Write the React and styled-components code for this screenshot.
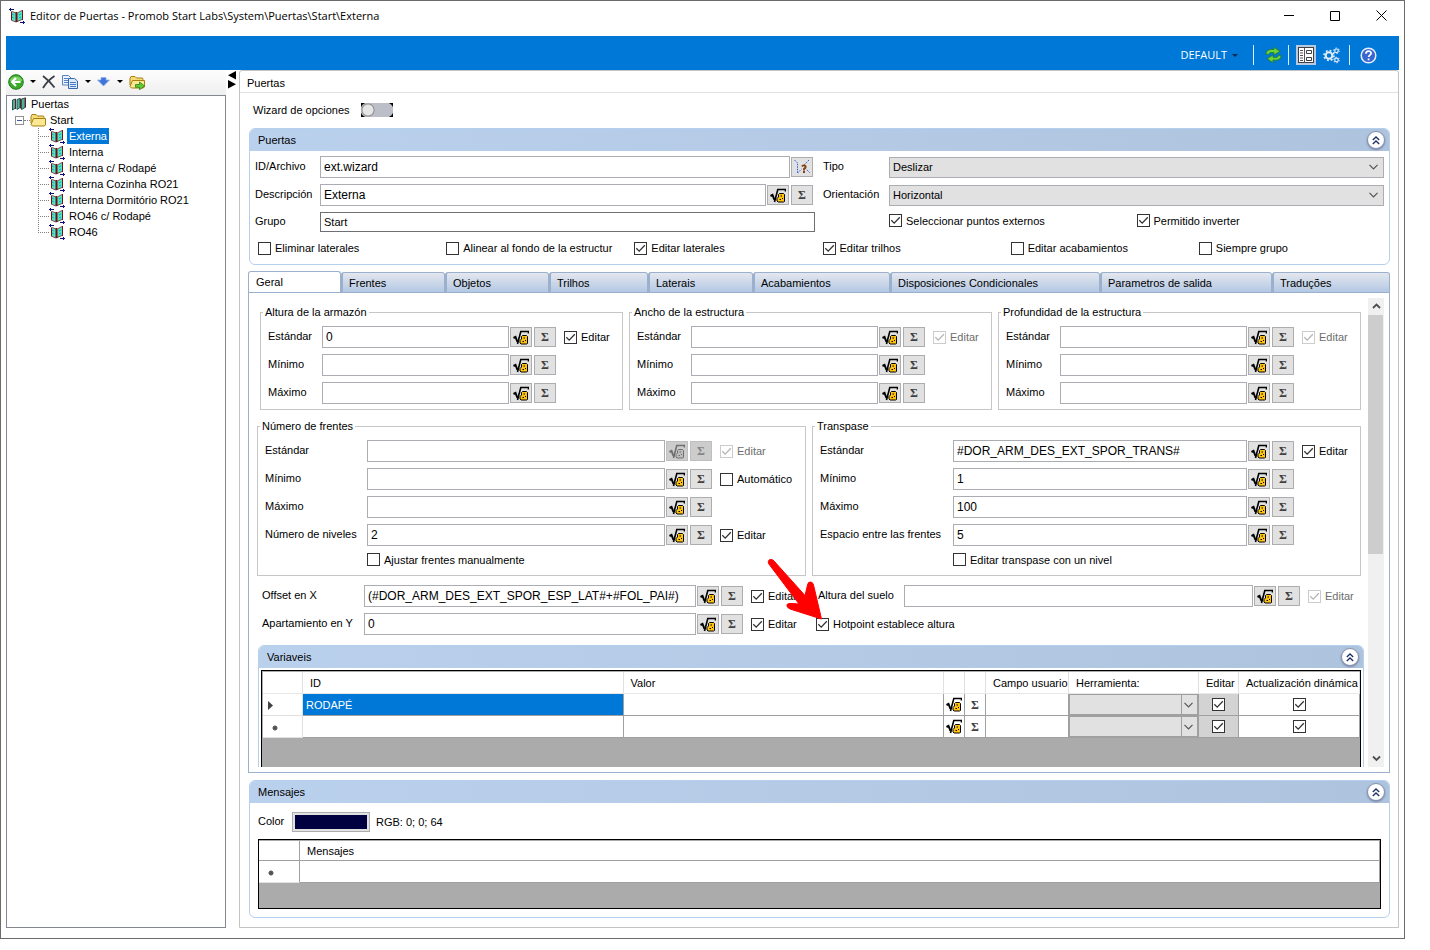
import React, { useState } from "react";
import styled, { createGlobalStyle, css } from "styled-components";

const BLUE = "#0078d7";
const EDGE = "#abadb3";
const CHEVRON =
  "url(\"data:image/svg+xml,%3Csvg xmlns='http://www.w3.org/2000/svg' width='9' height='6'%3E%3Cpath d='M.5 .8l4 4 4-4' fill='none' stroke='%23555' stroke-width='1.2'/%3E%3C/svg%3E\")";
const tick = (color) =>
  `url("data:image/svg+xml,%3Csvg xmlns='http://www.w3.org/2000/svg' width='11' height='11'%3E%3Cpath d='M1.3 5.2l2.9 2.9 5.6-5.9' fill='none' stroke='%23${color}' stroke-width='1.3'/%3E%3C/svg%3E")`;

const GlobalStyle = createGlobalStyle`
  *, *::before, *::after { box-sizing: border-box; }
  body { margin: 0; background: #fff; color: #000; font: 11px/16px "Liberation Sans", Arial, sans-serif; }
  button, input, select { font: inherit; color: inherit; margin: 0; padding: 0; border-radius: 0; }
  ul { list-style: none; margin: 0; padding: 0; }
  svg { display: block; flex: none; }
`;

/* ---------- window frame ---------- */
const Window = styled.div`
  display: flex;
  flex-direction: column;
  height: calc(100vh - 11px);
  min-height: 720px;
  min-width: 1180px;
  margin-right: 25px;
  padding: 0 5px 10px;
  border: 1px solid #6b6b6b;
`;
const TitleBar = styled.header`
  display: flex;
  align-items: center;
  height: 35px;
  padding: 0 0 6px 3px;
  gap: 5px;
`;
const Title = styled.h1`
  flex: 1;
  margin: 0;
  font: 12px/16px "Open Sans", sans-serif;
  font-size: 11px;
`;
const PlainButton = styled.button`
  display: flex;
  align-items: center;
  justify-content: center;
  border: 0;
  background: none;
`;
const CaptionButton = styled(PlainButton)`
  width: 36px;
  height: 28px;
  margin-left: 5px;
`;
const Ribbon = styled.nav`
  display: flex;
  align-items: center;
  justify-content: flex-end;
  flex: none;
  height: 34px;
  padding: 4px 21px 0 0;
  background: ${BLUE};
  color: #fff;
`;
const ProfileButton = styled(PlainButton)`
  gap: 5px;
  margin-right: 15px;
  font: 11px/16px "Open Sans", sans-serif;
`;
const Divider = styled.span`
  width: 1px;
  height: 20px;
  background: #dcebf8;
`;
const RibbonButton = styled(PlainButton)`
  width: ${(p) => p.$w || 20}px;
  height: 20px;
  margin: 0 ${(p) => p.$right || 0}px 0 ${(p) => p.$left || 0}px;
  background: ${(p) => (p.$active ? "#b9c9e2" : "none")};
`;
const Workspace = styled.div`
  display: flex;
  flex: 1;
  min-height: 0;
`;

/* ---------- tree side ---------- */
const Sidebar = styled.aside`
  display: flex;
  flex-direction: column;
  width: 220px;
  flex: none;
`;
const ToolStrip = styled.div`
  display: flex;
  align-items: center;
  flex: none;
  height: 25px;
  padding: 0 0 2px 1px;
  background: linear-gradient(#fdfdfd, #efefef);
`;
const ToolButton = styled(PlainButton)`
  width: ${(p) => p.$w}px;
  height: 20px;
`;
const Tree = styled.div`
  flex: 1;
  padding: 0 4px;
  border: 1px solid #828790;
`;
const TreeRow = styled.div`
  display: flex;
  align-items: center;
  height: 16px;
  padding-left: ${(p) => p.$indent || 0}px;
`;
const Dots = styled.span`
  width: ${(p) => p.$w}px;
  border-top: 1px dotted #808080;
`;
const Leaves = styled.ul`
  margin-left: 27px;
  background: repeating-linear-gradient(#808080 0 1px, transparent 1px 2px) 0 0 / 1px calc(100% - 8px) no-repeat;
`;
const NodeName = styled.button`
  height: 16px;
  margin-left: ${(p) => p.$gap || 2}px;
  padding: 0 2px;
  border: 0;
  line-height: 16px;
  background: ${(p) => (p.$selected ? BLUE : "none")};
  color: ${(p) => (p.$selected ? "#fff" : "#000")};
`;
const Expander = styled.button`
  display: flex;
  align-items: center;
  justify-content: center;
  width: 9px;
  height: 9px;
  border: 1px solid #919191;
  background: #fff;
  &::after { content: ""; width: 5px; height: 1px; background: #3c5aa0; }
`;
const Splitter = styled.div`
  width: 13px;
  flex: none;
  padding: 1px 0 0 2px;
`;

/* ---------- main side ---------- */
const Main = styled.main`
  display: flex;
  flex-direction: column;
  flex: 1;
  min-width: 0;
  border: 1px solid #c3c3c3;
  border-radius: 3px 3px 0 0;
`;
const Heading = styled.h2`
  flex: none;
  height: 22px;
  margin: 0;
  padding: 4px 7px 0;
  border-bottom: 1px solid #e1e1e1;
  font: inherit;
`;
const WizardRow = styled.label`
  display: flex;
  align-items: center;
  flex: none;
  gap: 11px;
  height: 35px;
  padding: 0 13px 1px;
`;
const Switch = styled.input`
  appearance: none;
  width: 32px;
  height: 14px;
  background:
    radial-gradient(circle at 7px 7px, #e6e6e6 5px, #8c8c8c 6px, transparent 7px),
    radial-gradient(circle at 7px 7px, #bcbec8 7px, transparent 8px),
    radial-gradient(circle at 25px 7px, #bcbec8 7px, transparent 8px),
    linear-gradient(90deg, #000 7px, #bcbec8 7px 25px, #000 25px);
`;
const Panel = styled.section`
  flex: none;
  margin: ${(p) => (p.$inner ? "10px -3px 0 1px" : "0 8px 0 9px")};
  border: 1px solid #b5d0ee;
  border-radius: 6px;
`;
const PanelHeader = styled.header`
  display: flex;
  align-items: center;
  justify-content: space-between;
  height: 22px;
  padding: 0 4px 0 8px;
  border-radius: 5px 5px 0 0;
  background: linear-gradient(90deg, #bad1ed, #aec3de);
`;
const PanelTitle = styled.h3`
  margin: 0;
  font: inherit;
`;
const Collapse = styled(PlainButton)`
  width: 18px;
  height: 18px;
  border: 1px solid #8791ad;
  border-radius: 9px;
  background: #fff;
  box-shadow: 0 1px 2px rgba(60, 70, 110, 0.5);
`;
const DoorForm = styled.div`
  display: grid;
  grid-template-columns: 65px minmax(0, 1fr) 74px minmax(0, 1fr);
  row-gap: 6px;
  padding: 5px 5px 0;
`;
const Label = styled.label`
  width: ${(p) => (p.$w ? `${p.$w}px` : "auto")};
  flex: none;
  padding-bottom: 3px;
  padding-left: ${(p) => p.$left || 0}px;
  white-space: nowrap;
`;
const GridLabel = styled(Label)`
  align-self: center;
`;
const TextBox = styled.input`
  flex: 1;
  min-width: 0;
  width: 100%;
  height: ${(p) => (p.$flat ? 20 : 22)}px;
  padding: 0 3px;
  border: 1px solid ${(p) => (p.$flat ? "#6f6f74" : EDGE)};
  background: #fff;
  font-size: ${(p) => (p.$flat ? 11 : 12)}px;
`;
const InputGroup = styled.div`
  display: flex;
  align-items: center;
  gap: ${(p) => (p.$gap === undefined ? 1 : p.$gap)}px;
  min-width: 0;
  padding-right: ${(p) => p.$right || 0}px;
`;
const SmallButton = styled.button`
  display: flex;
  align-items: center;
  justify-content: center;
  flex: none;
  width: 22px;
  height: 20px;
  margin-right: ${(p) => p.$right || 0}px;
  border: 1px solid #adadb0;
  background: #e1e1e1;
  &:disabled { background: #ccc; border-color: #bfbfbf; }
`;
const Sigma = styled.span`
  font: bold 12px/14px "Liberation Serif", serif;
  color: ${(p) => (p.$off ? "#858585" : "#404040")};
`;
const Select = styled.select`
  appearance: none;
  width: 100%;
  height: 21px;
  padding: 0 3px;
  border: 1px solid ${EDGE};
  background: ${CHEVRON} right 5px center no-repeat #e1e1e1;
  opacity: 1;
`;
const GridSelect = styled(Select)`
  display: block;
  height: 21px;
  border-color: #a0a0a0;
  background: ${CHEVRON} right 4px center no-repeat,
    linear-gradient(#a0a0a0, #a0a0a0) right 15px top / 1px 100% no-repeat, #e1e1e1;
`;
const CheckLabel = styled.label`
  display: flex;
  align-items: center;
  gap: 4px;
  flex: none;
  white-space: nowrap;
  color: ${(p) => (p.$off ? "#6d6d6d" : "#000")};
`;
const CheckBox = styled.input`
  appearance: none;
  flex: none;
  width: 13px;
  height: 13px;
  border: 1px solid #333;
  background: #fff;
  &:checked { background: ${tick("333")} center no-repeat #fff; }
  &:disabled { border-color: #ccc; }
  &:disabled:checked { background-image: ${tick("b5b5b5")}; }
`;
const PairRow = styled.div`
  display: flex;
  grid-column: span 2;
  height: 17px;
  padding-left: 74px;
`;
const PairItem = styled.div`
  display: flex;
  width: 250px;
`;
const FlagRow = styled.div`
  display: grid;
  grid-template-columns: repeat(6, 1fr);
  height: 32px;
  align-items: center;
  padding: 0 2px 0 8px;
`;

/* ---------- tabs ---------- */
const TabList = styled.div`
  display: grid;
  grid-template-columns: ${(p) => p.$sizes.map((n) => `minmax(0, ${n}fr)`).join(" ")};
  align-items: end;
  flex: none;
  margin: 6px 8px -1px 8px;
`;
const Tab = styled.button`
  min-width: 0;
  height: 21px;
  padding: 0 6px;
  border: 1px solid #9ab0cd;
  border-left-width: 2px;
  border-radius: 3px 3px 0 0;
  background: linear-gradient(#e4e7ee, #b3c8e4);
  text-align: left;
  white-space: nowrap;
  ${(p) =>
    p.$active &&
    css`
      height: 22px;
      padding: 0 7px;
      border-left-width: 1px;
      border-bottom-color: #d5dfec;
      background: #fff;
    `}
`;
const TabBody = styled.div`
  display: flex;
  flex: 1;
  min-height: 0;
  margin: 0 8px 7px 8px;
  padding: 5px;
  border: 1px solid #9ab0cd;
`;
const ScrollArea = styled.div`
  flex: 1;
  min-width: 0;
  overflow: hidden;
  padding: 6px 7px 0 3px;
`;
const ScrollBar = styled.div`
  display: flex;
  flex-direction: column;
  width: 16px;
  flex: none;
  background: #f0f0f0;
`;
const ScrollTrack = styled.div`
  flex: 1;
`;
const ScrollThumb = styled.div`
  height: 55%;
  margin-right: 1px;
  background: #cdcdcd;
`;
const ScrollButton = styled(PlainButton)`
  height: 17px;
`;
const Columns = styled.div`
  display: flex;
  gap: 6px;
  margin-left: ${(p) => p.$left || 0}px;
  margin-bottom: ${(p) => p.$bottom || 0}px;
`;
const Group = styled.fieldset`
  display: flex;
  flex-direction: column;
  flex: 1 1 0;
  gap: 6px;
  min-width: 0;
  margin: 0;
  padding: 6px 0 5px 7px;
  border: 1px solid #c6c6c6;
`;
const Legend = styled.legend`
  margin-left: -5px;
  padding: 0 2px;
`;
const UnderField = styled.div`
  display: flex;
  height: 18px;
  padding-left: ${(p) => p.$left}px;
  padding-bottom: 3px;
`;
const OffsetGrid = styled.div`
  display: grid;
  grid-template-columns: 556fr 543fr;
  row-gap: 6px;
  padding-left: 5px;
`;
const Pinned = styled.div`
  position: relative;
  display: flex;
  align-items: center;
  margin-left: -2px;
`;
const Pointer = styled.svg`
  position: absolute;
  right: calc(100% - 8px);
  bottom: 15px;
  pointer-events: none;
`;

/* ---------- data grids ---------- */
const GridFrame = styled.div`
  height: ${(p) => p.$h}px;
  margin: ${(p) => (p.$inner ? "2px 2px 0" : "0 8px 8px")};
  padding: 1px 0 0 ${(p) => (p.$inner ? 1 : 0)}px;
  border: 1px solid #000;
  background: #ababab;
`;
const DataTable = styled.table`
  width: 100%;
  table-layout: fixed;
  border-collapse: separate;
  border-spacing: 0;
  background: #fff;
`;
const HeadCell = styled.th`
  height: ${(p) => p.$h || 22}px;
  padding: 0 7px;
  border-right: 1px solid ${(p) => p.$line || "#e0e0e0"};
  border-bottom: 1px solid ${(p) => p.$line || "#e8e8e8"};
  font-weight: normal;
  text-align: left;
  white-space: nowrap;
`;
const Cell = styled.td`
  height: 22px;
  padding: 0 ${(p) => (p.$flush ? 0 : 3)}px;
  border-right: 1px solid #a0a0a0;
  border-bottom: 1px solid #a0a0a0;
  background: ${(p) => (p.$selected ? BLUE : p.$shade ? "#d3d3d3" : "#fff")};
  color: ${(p) => (p.$selected ? "#fff" : "#000")};
  text-align: ${(p) => (p.$center ? "center" : "left")};
`;
const RowHead = styled.th`
  height: 22px;
  padding: 2px 5px 0;
  border-right: 1px solid ${(p) => p.$line || "#e0e0e0"};
  border-bottom: 1px solid #e0e0e0;
`;
const CellButton = styled(PlainButton)`
  width: 100%;
  height: 20px;
`;
const CenterBox = styled(CheckBox)`
  display: block;
  margin: 0 auto;
`;
const ColorRow = styled.div`
  display: flex;
  align-items: center;
  height: 36px;
  padding: 2px 8px 0;
`;
const ColorButton = styled.button`
  width: 78px;
  height: 20px;
  margin-right: 6px;
  padding: 2px;
  border: 1px solid #adadad;
  background: #e1e1e1;
  &::after { content: ""; display: block; height: 14px; background: #000040; }
`;
const BottomSpace = styled.div`
  flex: none;
  height: 9px;
`;

/* ---------- icons ---------- */
const DoorIcon = () => (
  <svg width="16" height="16" viewBox="0 0 16 16">
    <path d="M2 3.500l5 1.500v9l-5-2z" fill="#4fe6c4" />
    <path d="M8 5l5.500-2.500v9L8 14z" fill="#4fe6c4" />
    <path d="M3 6l2 1M3 9l2 1M10 7l2-1M10 10l2-1" stroke="#1f9fb5" />
    <path d="M2.500 3.500v9M13.500 2v10" stroke="#7a0c18" />
    <path d="M7.500 4v10" stroke="#7a0c18" strokeWidth="2" />
    <path d="M3 3.500l4 1.500M9 4.500l4-2M3 12.500l4 1.500 6-2.500" stroke="#7a0c18" strokeWidth=".7" fill="none" />
    <path d="M0 1.500h5M1.500 0v3M11 14.500h5M14.500 13v3" stroke="#10107c" fill="none" />
  </svg>
);
const DoorsIcon = () => (
  <svg width="16" height="16" viewBox="0 0 16 16">
    <path d="M1.500 4l3-1v9l-3 2zM6 3.500l3-1v9l-3 2zM10.500 3l3.500-1v9.500l-3.500 2z" fill="#4fb39b" stroke="#245a52" />
    <path d="M4.500 3v10M9.500 2.500v10M14.500 1.500v10" stroke="#6d1a22" />
  </svg>
);
const FolderIcon = ({ move }) => (
  <svg width="16" height="16" viewBox="0 0 16 16">
    <path d="M1 4.500l1-2h4l1.500 1.500h6l.5 1.500V11H1z" fill="#f5dc78" stroke="#a97e12" />
    <path d="M3.500 6.500h12V13l-1.500 1H2.500L1 12.500z" fill="#fae893" stroke="#a97e12" />
    {move && <path d="M6.500 10.500h4v-2.500l5 4-5 3.800v-2.500h-4z" fill="#5fce35" stroke="#2e7d14" strokeWidth=".8" />}
  </svg>
);
const BackIcon = () => (
  <svg width="16" height="16" viewBox="0 0 16 16">
    <circle cx="8" cy="8" r="7.300" fill="#3cab2c" stroke="#1f7a17" />
    <path d="M1.800 7a6.300 5.500 0 0 1 12.400 0z" fill="#80d168" />
    <path d="M12.500 8h-8M8 4L4 8l4 4" stroke="#fff" strokeWidth="2" fill="none" />
  </svg>
);
const DeleteIcon = () => (
  <svg width="14" height="14" viewBox="0 0 14 14">
    <path d="M1 1c4 3 8 7 11.500 11.500M12.500 1C8 4 4 8 1 13" stroke="#3b3f46" strokeWidth="1.800" fill="none" />
  </svg>
);
const CopyIcon = () => (
  <svg width="16" height="14" viewBox="0 0 16 14">
    <path d="M.5.500h6l2.500 2.500v7H.5z" fill="#e9f1fc" stroke="#5a84bf" />
    <path d="M2 3.500h4M2 5.500h4M2 7.500h4" stroke="#5a84bf" />
    <path d="M6.500 3.500h6l3 2.500v7.500h-9z" fill="#dce9fb" stroke="#3767ad" />
    <path d="M8 7.500h6M8 9.500h6M8 11.500h6" stroke="#4a7bc0" />
  </svg>
);
const DownIcon = () => (
  <svg width="13" height="10" viewBox="0 0 13 10">
    <path d="M4 .5h5V3h3.500L6.500 9 .5 3H4z" fill="#3f74d8" stroke="#8fb0e6" strokeWidth=".8" />
  </svg>
);
const Caret = ({ color = "#000" }) => (
  <svg width="6" height="3" viewBox="0 0 6 3">
    <path d="M0 0h6L3 3z" fill={color} />
  </svg>
);
const RefreshIcon = () => (
  <svg width="17" height="16" viewBox="0 0 17 16">
    <path d="M1 7c0-3.500 3-5 8-4.500V.3L15 4.300 9 8V5.700C5 5.200 4 6 3.500 7.800z" fill="#6bd23c" stroke="#247a1a" strokeWidth=".8" />
    <path d="M16 8.500c0 4-3 5.200-8 4.500v2.700L2 11.800 8 8v2.200c4 .6 5 0 5.500-2z" fill="#6bd23c" stroke="#247a1a" strokeWidth=".8" />
  </svg>
);
const FormIcon = () => (
  <svg width="17" height="17" viewBox="0 0 17 17">
    <rect x=".5" y=".5" width="15" height="15" fill="#fff" stroke="#404040" />
    <path d="M6.500 1v15M2 3.500h3M2 6h3M2 8.500h3M2 11h3M2 13.500h3" stroke="#555" fill="none" />
    <path d="M8.500 3.500h5v3h-5zM8.500 10.500h5v3h-5z" fill="#fff" stroke="#404040" />
  </svg>
);
const GearsIcon = () => (
  <svg width="17" height="17" viewBox="0 0 17 17" fill="none" stroke="#e4eefa">
    <circle cx="6" cy="8.500" r="3.300" strokeWidth="2" />
    <circle cx="6" cy="8.500" r="5" strokeWidth="1.600" strokeDasharray="1.960 1.960" />
    <circle cx="13.500" cy="3.800" r="1.800" strokeWidth="1.200" />
    <circle cx="13.500" cy="3.800" r="2.800" strokeDasharray="1.400 1.530" />
    <circle cx="13.500" cy="13" r="1.800" strokeWidth="1.200" />
    <circle cx="13.500" cy="13" r="2.800" strokeDasharray="1.400 1.530" />
  </svg>
);
const HelpIcon = () => (
  <svg width="17" height="17" viewBox="0 0 17 17">
    <circle cx="8.500" cy="8.500" r="7.300" fill="#3a66d0" stroke="#e8eefb" strokeWidth="1.500" />
    <path d="M5.900 6.700c0-3.500 5.400-3.400 5.200-.3-.1 1.700-2.500 1.700-2.500 3.700" stroke="#fff" strokeWidth="1.700" fill="none" />
    <path d="M7.700 11.500h1.800v1.800H7.700z" fill="#fff" />
  </svg>
);
const FormulaIcon = ({ off }) => {
  const ink = off ? "#6f6f6f" : "#000";
  return (
    <svg width="16" height="15" viewBox="0 0 16 15">
      <path d="M.5 8L2.500 7 4.500 12" stroke={ink} strokeWidth="2" fill="none" />
      <path d="M4.500 14L7.800 1.500H15.500V3.500" stroke={ink} strokeWidth="1.600" fill="none" />
      <path d="M9.500 5.500h4l1 1V13.500l-1 .500H8L7 13v-2.500l1.500-1.500V6.500z" fill={off ? "#bdbdbd" : "#ffc20e"} stroke={ink} />
      <path d="M10.500 7.500h1.500v1h-1.500zM9.500 11h1.500v1H9.500zM12 10h1v1h-1z" fill={ink} />
    </svg>
  );
};
const WizardIcon = () => (
  <svg width="18" height="16" viewBox="0 0 18 16">
    <path d="M1.500 1l3 3v10M4.500 14l4-4M16 1l-5 5M12 9l5 5" fill="none" stroke="#2d5fe0" strokeDasharray="1.500 1" />
    <path d="M9 7.500c1-2 4.500-1 3.500 1L11 10v1.500M10 13h2" fill="none" stroke="#85421a" strokeWidth="1.900" />
  </svg>
);
const CollapseIcon = () => (
  <svg width="8" height="9" viewBox="0 0 8 9">
    <path d="M.8 4L4 1l3.200 3M.8 8L4 5l3.200 3" fill="none" stroke="#1d2f66" strokeWidth="1.300" />
  </svg>
);
const ScrollChevron = ({ down }) => (
  <svg width="9" height="7" viewBox="0 0 9 7">
    <path d={down ? "M1 1.500l3.500 3.500L8 1.500" : "M1 5l3.500-3.500L8 5"} fill="none" stroke="#505050" strokeWidth="1.800" />
  </svg>
);
const NewRowMark = () => (
  <svg width="12" height="8" viewBox="0 0 12 8">
    <circle cx="7" cy="4" r="2" fill="#404040" />
    <path d="M7 1v6M4 4h6M5 2l4 4M9 2L5 6" stroke="#555" strokeWidth=".8" />
  </svg>
);
const CurrentRowMark = () => (
  <svg width="6" height="9" viewBox="0 0 6 9">
    <path d="M0 0l5 4.500L0 9z" fill="#404040" />
  </svg>
);

/* ---------- parts ---------- */
function Check({ label, checked = false, off }) {
  return (
    <CheckLabel $off={off}>
      <CheckBox type="checkbox" defaultChecked={checked} disabled={off} />
      {label}
    </CheckLabel>
  );
}

function FormulaButtons({ off }) {
  return (
    <>
      <SmallButton type="button" aria-label="Fórmula" disabled={off} $right={1}>
        <FormulaIcon off={off} />
      </SmallButton>
      <SmallButton type="button" aria-label="Suma" disabled={off}>
        <Sigma $off={off}>Σ</Sigma>
      </SmallButton>
    </>
  );
}

const CheckSlot = styled.div`
  display: flex;
  flex: none;
  width: ${(p) => p.$w}px;
  padding-left: 7px;
`;

function Field({ id, label, labelWidth, value = "", slot = 65, check, offButtons }) {
  return (
    <InputGroup>
      <Label htmlFor={id} $w={labelWidth - 1}>{label}</Label>
      <TextBox id={id} defaultValue={value} />
      <FormulaButtons off={offButtons} />
      <CheckSlot $w={slot}>{check}</CheckSlot>
    </InputGroup>
  );
}

function PanelTop({ title }) {
  return (
    <PanelHeader>
      <PanelTitle>{title}</PanelTitle>
      <Collapse type="button" aria-label={`Contraer ${title}`}>
        <CollapseIcon />
      </Collapse>
    </PanelHeader>
  );
}

function DimensionGroup({ id, title, value, off }) {
  return (
    <Group>
      <Legend>{title}</Legend>
      <Field id={`${id}-std`} label="Estándar" labelWidth={54} value={value} check={<Check label="Editar" checked off={off} />} />
      <Field id={`${id}-min`} label="Mínimo" labelWidth={54} />
      <Field id={`${id}-max`} label="Máximo" labelWidth={54} />
    </Group>
  );
}

const leaves = ["Externa", "Interna", "Interna c/ Rodapé", "Interna Cozinha RO21", "Interna Dormitório RO21", "RO46 c/ Rodapé", "RO46"];
const tabs = [
  ["Geral", 93], ["Frentes", 104], ["Objetos", 104], ["Trilhos", 99], ["Laterais", 105],
  ["Acabamientos", 137], ["Disposiciones Condicionales", 210], ["Parametros de salida", 172], ["Traduções", 118],
];
const flags = [
  ["Eliminar laterales", false], ["Alinear al fondo de la estructur", false], ["Editar laterales", true],
  ["Editar trilhos", true], ["Editar acabamientos", false], ["Siempre grupo", false],
];

function VariableRow({ name, current }) {
  return (
    <tr>
      <RowHead scope="row">{current ? <CurrentRowMark /> : <NewRowMark />}</RowHead>
      <Cell $selected={current}>{name}</Cell>
      <Cell />
      <Cell $flush><CellButton type="button" aria-label="Fórmula"><FormulaIcon /></CellButton></Cell>
      <Cell $flush><CellButton type="button" aria-label="Suma"><Sigma>Σ</Sigma></CellButton></Cell>
      <Cell />
      <Cell $flush><GridSelect aria-label="Herramienta" disabled /></Cell>
      <Cell $shade $center><CenterBox type="checkbox" aria-label="Editar" defaultChecked /></Cell>
      <Cell $center><CenterBox type="checkbox" aria-label="Actualización dinámica" defaultChecked /></Cell>
    </tr>
  );
}

export default function App() {
  const [selected, setSelected] = useState("Externa");
  const [tab, setTab] = useState("Geral");
  return (
    <>
      <GlobalStyle />
      <Window>
        <TitleBar>
          <DoorIcon />
          <Title>Editor de Puertas - Promob Start Labs\System\Puertas\Start\Externa</Title>
          <CaptionButton type="button" aria-label="Minimizar">
            <svg width="10" height="1"><path d="M0 .5h10" stroke="#000" /></svg>
          </CaptionButton>
          <CaptionButton type="button" aria-label="Maximizar">
            <svg width="10" height="10"><path d="M.5.500h9v9h-9z" stroke="#000" fill="none" /></svg>
          </CaptionButton>
          <CaptionButton type="button" aria-label="Cerrar">
            <svg width="11" height="11"><path d="M.5.500l10 10M10.500.5l-10 10" stroke="#000" /></svg>
          </CaptionButton>
        </TitleBar>
        <Ribbon>
          <ProfileButton type="button">DEFAULT <Caret color="#0b2a4a" /></ProfileButton>
          <Divider />
          <RibbonButton type="button" aria-label="Actualizar" $left={9} $right={5}><RefreshIcon /></RibbonButton>
          <Divider />
          <RibbonButton type="button" aria-label="Vista de formulario" $active $left={7} $right={5}><FormIcon /></RibbonButton>
          <RibbonButton type="button" aria-label="Configuración" $right={8}><GearsIcon /></RibbonButton>
          <Divider />
          <RibbonButton type="button" aria-label="Ayuda" $left={8}><HelpIcon /></RibbonButton>
        </Ribbon>
        <Workspace>
          <Sidebar>
            <ToolStrip>
              <ToolButton type="button" aria-label="Volver" $w={17}><BackIcon /></ToolButton>
              <ToolButton type="button" aria-label="Más opciones para volver" $w={17}><Caret /></ToolButton>
              <ToolButton type="button" aria-label="Eliminar" $w={15}><DeleteIcon /></ToolButton>
              <ToolButton type="button" aria-label="Copiar" $w={28}><CopyIcon /></ToolButton>
              <ToolButton type="button" aria-label="Opciones de copia" $w={7}><Caret /></ToolButton>
              <ToolButton type="button" aria-label="Bajar" $w={24}><DownIcon /></ToolButton>
              <ToolButton type="button" aria-label="Opciones de orden" $w={9}><Caret /></ToolButton>
              <ToolButton type="button" aria-label="Mover a carpeta" $w={25}><FolderIcon move /></ToolButton>
            </ToolStrip>
            <Tree>
              <TreeRow><DoorsIcon /><NodeName type="button" $gap={2}>Puertas</NodeName></TreeRow>
              <TreeRow $indent={4}>
                <Expander type="button" aria-label="Contraer Start" />
                <Dots $w={6} />
                <FolderIcon />
                <NodeName type="button" $gap={2}>Start</NodeName>
              </TreeRow>
              <Leaves>
                {leaves.map((name) => (
                  <li key={name}>
                    <TreeRow>
                      <Dots $w={11} />
                      <DoorIcon />
                      <NodeName type="button" $selected={selected === name} onClick={() => setSelected(name)}>{name}</NodeName>
                    </TreeRow>
                  </li>
                ))}
              </Leaves>
            </Tree>
          </Sidebar>
          <Splitter>
            <svg width="8" height="18" viewBox="0 0 8 18"><path d="M8 0v8.500L0 4.300zM0 9l8 4.300L0 17.500z" fill="#000" /></svg>
          </Splitter>
          <Main>
            <Heading>Puertas</Heading>
            <WizardRow>
              Wizard de opciones
              <Switch type="checkbox" role="switch" />
            </WizardRow>
            <Panel>
              <PanelTop title="Puertas" />
              <DoorForm>
                <GridLabel htmlFor="archivo">ID/Archivo</GridLabel>
                <InputGroup $right={2}>
                  <TextBox id="archivo" defaultValue="ext.wizard" />
                  <SmallButton type="button" aria-label="Asistente"><WizardIcon /></SmallButton>
                </InputGroup>
                <GridLabel htmlFor="tipo" $left={8}>Tipo</GridLabel>
                <InputGroup $right={0}>
                  <Select id="tipo" defaultValue="Deslizar"><option>Deslizar</option></Select>
                </InputGroup>
                <GridLabel htmlFor="descripcion">Descripción</GridLabel>
                <InputGroup $right={2}>
                  <TextBox id="descripcion" defaultValue="Externa" />
                  <FormulaButtons />
                </InputGroup>
                <GridLabel htmlFor="orientacion" $left={8}>Orientación</GridLabel>
                <InputGroup>
                  <Select id="orientacion" defaultValue="Horizontal"><option>Horizontal</option></Select>
                </InputGroup>
                <GridLabel htmlFor="grupo">Grupo</GridLabel>
                <TextBox id="grupo" $flat defaultValue="Start" />
                <PairRow>
                  <PairItem><Check label="Seleccionar puntos externos" checked /></PairItem>
                  <PairItem><Check label="Permitido inverter" checked /></PairItem>
                </PairRow>
              </DoorForm>
              <FlagRow>
                {flags.map(([label, on]) => <Check key={label} label={label} checked={on} />)}
              </FlagRow>
            </Panel>
            <TabList role="tablist" $sizes={tabs.map(([, size]) => size)}>
              {tabs.map(([name]) => (
                <Tab key={name} type="button" role="tab" aria-selected={tab === name} $active={tab === name} onClick={() => setTab(name)}>
                  {name}
                </Tab>
              ))}
            </TabList>
            <TabBody>
              <ScrollArea>
                <Columns $left={3} $bottom={8}>
                  <DimensionGroup id="altura" title="Altura de la armazón" value="0" />
                  <DimensionGroup id="ancho" title="Ancho de la estructura" off />
                  <DimensionGroup id="profundidad" title="Profundidad de la estructura" off />
                </Columns>
                <Columns $bottom={9}>
                  <Group>
                    <Legend>Número de frentes</Legend>
                    <Field id="nf-std" label="Estándar" labelWidth={102} slot={92} offButtons check={<Check label="Editar" checked off />} />
                    <Field id="nf-min" label="Mínimo" labelWidth={102} slot={92} check={<Check label="Automático" />} />
                    <Field id="nf-max" label="Máximo" labelWidth={102} slot={92} />
                    <Field id="nf-niv" label="Número de niveles" labelWidth={102} value="2" slot={92} check={<Check label="Editar" checked />} />
                    <UnderField $left={102}><Check label="Ajustar frentes manualmente" /></UnderField>
                  </Group>
                  <Group>
                    <Legend>Transpase</Legend>
                    <Field id="tr-std" label="Estándar" labelWidth={133} value="#DOR_ARM_DES_EXT_SPOR_TRANS#" check={<Check label="Editar" checked />} />
                    <Field id="tr-min" label="Mínimo" labelWidth={133} value="1" />
                    <Field id="tr-max" label="Máximo" labelWidth={133} value="100" />
                    <Field id="tr-esp" label="Espacio entre las frentes" labelWidth={133} value="5" />
                    <UnderField $left={133}><Check label="Editar transpase con un nivel" /></UnderField>
                  </Group>
                </Columns>
                <OffsetGrid>
                  <Field id="offx" label="Offset en X" labelWidth={102} value="(#DOR_ARM_DES_EXT_SPOR_ESP_LAT#+#FOL_PAI#)" slot={74} check={<Check label="Editar" checked />} />
                  <Field id="suelo" label="Altura del suelo" labelWidth={86} slot={60} check={<Check label="Editar" checked off />} />
                  <Field id="offy" label="Apartamiento en Y" labelWidth={102} value="0" slot={74} check={<Check label="Editar" checked />} />
                  <Pinned>
                    <Check label="Hotpoint establece altura" checked />
                    <Pointer width="58" height="62" viewBox="0 0 58 62">
                      <path
                        d="M2.500 5.500Q1.500 1.500 5 1.500 7 1.500 8 3L39 37.500 41.500 27Q42 23.500 45 24 47.500 24.500 48 29L55.500 61 24 51Q20 49 21 46.500 22 45 26 45.500L33 46z"
                        fill="#fe0000"
                        stroke="#fe0000"
                        strokeLinejoin="round"
                      />
                    </Pointer>
                  </Pinned>
                </OffsetGrid>
                <Panel $inner>
                  <PanelTop title="Variaveis" />
                  <GridFrame $h={130} $inner>
                    <DataTable>
                      <colgroup>
                        <col width="40" /><col /><col /><col width="21" /><col width="21" />
                        <col width="83" /><col width="130" /><col width="40" /><col width="121" />
                      </colgroup>
                      <thead>
                        <tr>
                          <HeadCell /><HeadCell>ID</HeadCell><HeadCell>Valor</HeadCell><HeadCell /><HeadCell />
                          <HeadCell>Campo usuario</HeadCell><HeadCell>Herramienta:</HeadCell><HeadCell>Editar</HeadCell>
                          <HeadCell>Actualización dinámica</HeadCell>
                        </tr>
                      </thead>
                      <tbody>
                        <VariableRow name="RODAPÉ" current />
                        <VariableRow name="" />
                      </tbody>
                    </DataTable>
                  </GridFrame>
                </Panel>
              </ScrollArea>
              <ScrollBar>
                <ScrollButton type="button" aria-label="Subir"><ScrollChevron /></ScrollButton>
                <ScrollTrack><ScrollThumb /></ScrollTrack>
                <ScrollButton type="button" aria-label="Bajar"><ScrollChevron down /></ScrollButton>
              </ScrollBar>
            </TabBody>
            <Panel>
              <PanelTop title="Mensajes" />
              <ColorRow>
                <Label htmlFor="color" $w={34}>Color</Label>
                <ColorButton id="color" type="button" aria-label="Color" />
                RGB: 0; 0; 64
              </ColorRow>
              <GridFrame $h={70}>
                <DataTable>
                  <colgroup><col width="41" /><col /></colgroup>
                  <thead>
                    <tr><HeadCell $h={20} $line="#a0a0a0" /><HeadCell $h={20} $line="#a0a0a0">Mensajes</HeadCell></tr>
                  </thead>
                  <tbody>
                    <tr><RowHead scope="row" $line="#a0a0a0"><NewRowMark /></RowHead><Cell /></tr>
                  </tbody>
                </DataTable>
              </GridFrame>
            </Panel>
            <BottomSpace />
          </Main>
        </Workspace>
      </Window>
    </>
  );
}
